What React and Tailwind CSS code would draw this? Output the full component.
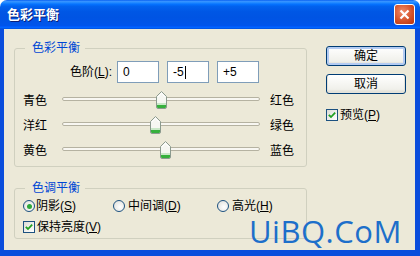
import React from 'react';

const FONT = "font-['Liberation_Sans','Noto_Sans_CJK_SC',sans-serif]";

const Thumb = ({ left }) => (
    <svg
        className="absolute top-[-7px]"
        style={{ left }}
        width="11"
        height="18"
        viewBox="0 0 11 18"
    >
        <path d="M5.5 0.5 L10.5 5.5 V16 Q10.5 17.5 9 17.5 H2 Q0.5 17.5 0.5 16 V5.5 Z" fill="#f6f7f2" stroke="#8b9a8e" />
        <path d="M1 14 H10 V16 Q10 17 9 17 H2 Q1 17 1 16 Z" fill="#36b03c" />
        <path d="M1 13 H10" stroke="#9ad99a" />
        <path d="M2 6 L5.5 2.2 L9 6" fill="none" stroke="#ffffff" />
    </svg>
);

const SliderRow = ({ left, right, thumb }) => (
    <div className="flex items-center h-[25px]">
        <span className="w-[39px] mt-[5px]">{left}</span>
        <div className="relative w-[198px] h-[4px] rounded-[2px] border border-[#b5b2a1] bg-[#f8f7f2]">
            <Thumb left={thumb} />
        </div>
        <span className="ml-[10px] mt-[5px]">{right}</span>
    </div>
);

const Radio = ({ checked }) => (
    <span className="w-[12px] h-[12px] rounded-full border border-[#1c5180] bg-[radial-gradient(circle_at_60%_60%,#ffffff,#dcdcd6)] flex items-center justify-center mr-[1px]">
        {checked && <span className="w-[5px] h-[5px] rounded-full bg-[#2da83a]" />}
    </span>
);

const Check = () => (
    <span className="w-[12px] h-[12px] border border-[#1c5180] bg-[linear-gradient(135deg,#dcdcd6,#ffffff)] flex items-center justify-center mr-[2px]">
        <svg width="8" height="8" viewBox="0 0 8 8">
            <path d="M0.8 3.8 L3 6 L7.2 1.6" fill="none" stroke="#21a121" strokeWidth="1.8" />
        </svg>
    </span>
);

const Button = ({ children, isDefault }) => (
    <button
        className={
            'w-[80px] h-[20px] border border-[#003c74] rounded-[3px] bg-[linear-gradient(180deg,#ffffff,#f0f0ea_80%,#d6d0c5)] flex items-center justify-center text-[12px] text-black ' +
            (isDefault ? 'shadow-[inset_0_0_0_2px_#b3cbf2]' : 'shadow-[inset_0_-1px_0_1px_#e3e2da]')
        }
    >
        {children}
    </button>
);

export default function App() {
    return (
        <div className={`relative w-[420px] h-[256px] flex flex-col overflow-hidden rounded-t-[7px] bg-white text-[12px] text-black ${FONT}`}>
            <div className="h-[29px] flex items-center justify-between pl-[7px] pr-[5px] bg-[linear-gradient(180deg,#0058ee_0%,#3a93ff_4%,#288eff_8%,#127dff_12%,#036ffc_16%,#0262ee_22%,#0057e5_40%,#0054e3_60%,#0055eb_88%,#005bff_92%,#026afe_96%,#0048d8_100%)]">
                <span className="text-white font-bold text-[13px] [text-shadow:1px_1px_0_#0a1f7a]">色彩平衡</span>
                <div className="w-[21px] h-[21px] rounded-[3px] border border-white bg-[radial-gradient(circle_at_40%_35%,#f08b6a,#d4532b_55%,#b8330c)] flex items-center justify-center">
                    <svg width="11" height="11" viewBox="0 0 11 11">
                        <path d="M1.5 1.5 L9.5 9.5 M9.5 1.5 L1.5 9.5" stroke="#ffffff" strokeWidth="2.2" />
                    </svg>
                </div>
            </div>

            <div className="flex-1 flex border-l-[4px] border-r-[5px] border-b-[6px] border-[#0a4ddc]">
                <div className="flex-1 flex items-start bg-[#ece9d8]">
                    <div className="ml-[10px] mt-[12px] w-[293px] flex flex-col">
                        <fieldset className="border border-[#d0d0bf] rounded-[3px] px-[8px] pb-[5px]">
                            <legend className="ml-[2px] pl-[7px] pr-[5px] leading-[14px] text-[#0046d5]">色彩平衡</legend>
                            <div className="flex items-center h-[22px] mt-[6px]">
                                <span className="w-[89px] mr-[5px] text-right">色阶(<u>L</u>):</span>
                                <div className="w-[42px] h-[22px] border border-[#7f9db9] bg-white pl-[5px] flex items-center">0</div>
                                <div className="ml-[8px] w-[42px] h-[22px] border border-[#7f9db9] bg-white pl-[5px] flex items-center">
                                    -5<span className="inline-block w-px h-[13px] bg-black ml-px" />
                                </div>
                                <div className="ml-[8px] w-[42px] h-[22px] border border-[#7f9db9] bg-white pl-[5px] flex items-center">+5</div>
                            </div>
                            <div className="flex flex-col mt-[3px]">
                                <SliderRow left="青色" right="红色" thumb={93} />
                                <SliderRow left="洋红" right="绿色" thumb={87} />
                                <SliderRow left="黄色" right="蓝色" thumb={97} />
                            </div>
                        </fieldset>

                        <fieldset className="mt-[14px] border border-[#d0d0bf] rounded-[3px] px-[8px] pb-[3px]">
                            <legend className="ml-[2px] pl-[7px] pr-[5px] leading-[14px] text-[#0046d5]">色调平衡</legend>
                            <div className="flex items-center h-[16px] mt-[3px]">
                                <div className="w-[90px] flex items-center">
                                    <Radio checked />
                                    <span>阴影(<u>S</u>)</span>
                                </div>
                                <div className="w-[104px] flex items-center">
                                    <Radio />
                                    <span className="ml-[2px]">中间调(<u>D</u>)</span>
                                </div>
                                <div className="flex items-center">
                                    <Radio />
                                    <span className="ml-[2px] leading-[14px]">高光(<u>H</u>)</span>
                                </div>
                            </div>
                            <div className="flex items-center h-[16px] mt-[5px]">
                                <Check />
                                <span>保持亮度(<u>V</u>)</span>
                            </div>
                        </fieldset>
                    </div>

                    <div className="ml-[19px] mt-[17px] w-[80px] flex flex-col">
                        <Button isDefault>确定</Button>
                        <div className="mt-[8px]">
                            <Button>取消</Button>
                        </div>
                        <div className="mt-[14px] flex items-center h-[13px]">
                            <Check />
                            <span>预览(<u>P</u>)</span>
                        </div>
                    </div>
                </div>
            </div>

            <div className="absolute left-[249px] top-[219px] leading-[25px] text-[31px] tracking-[0.5px] text-[#1d6fca] font-['Open_Sans',sans-serif]">
                UiBQ.CoM
            </div>
        </div>
    );
}
